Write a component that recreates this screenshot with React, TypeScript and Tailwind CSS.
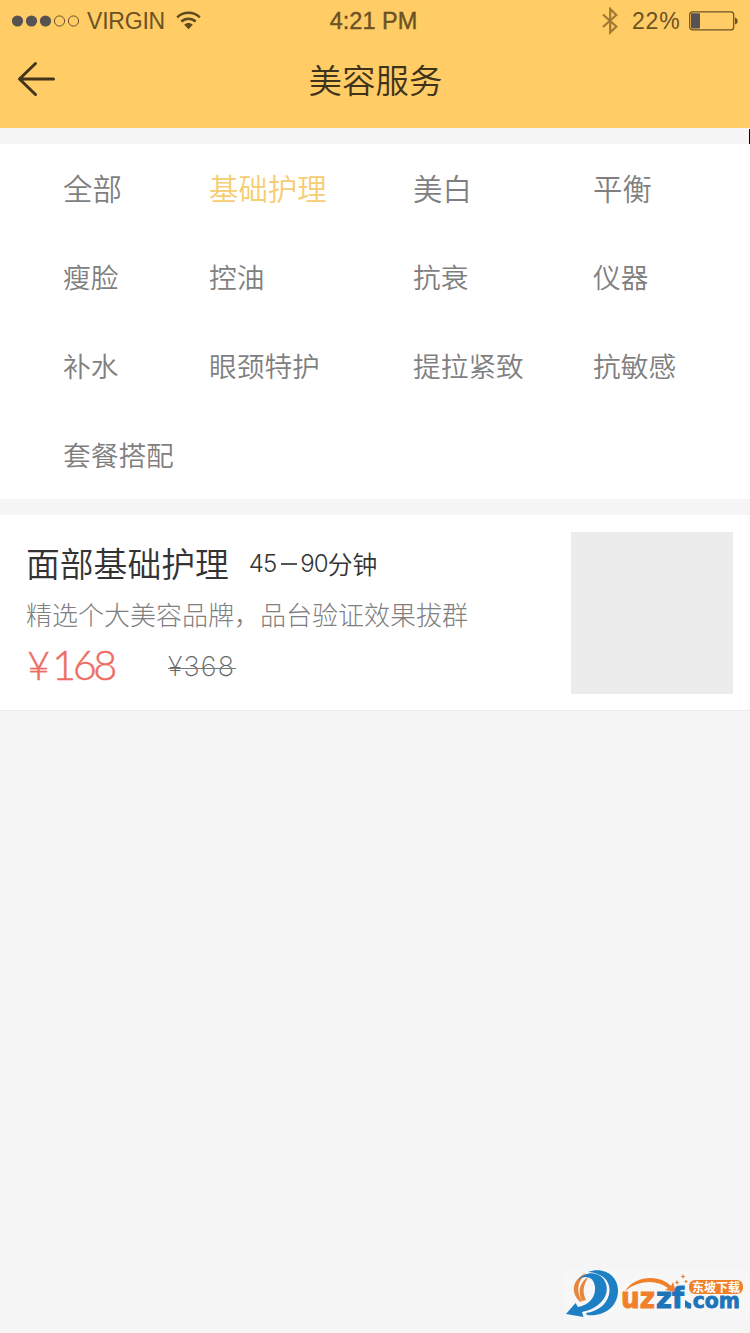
import clsx from "clsx";

interface Category {
  name: string;
  active?: boolean;
  large?: boolean;
}

const categories: Category[] = [
  { name: "全部", large: true },
  { name: "基础护理", active: true, large: true },
  { name: "美白", large: true },
  { name: "平衡", large: true },
  { name: "瘦脸" },
  { name: "控油" },
  { name: "抗衰" },
  { name: "仪器" },
  { name: "补水" },
  { name: "眼颈特护" },
  { name: "提拉紧致" },
  { name: "抗敏感" },
  { name: "套餐搭配" },
];

const StatusBar = () => {
  return (
    <div className="grid h-[41px] grid-cols-3 items-center font-['Liberation_Sans',sans-serif] text-[23px] leading-none text-[#6b5224]">
      <div className="flex items-center pl-3">
        <svg width="68" height="12" viewBox="0 0 68 12">
          <circle cx="5.5" cy="6" r="5.6" fill="#555251" />
          <circle cx="19.5" cy="6" r="5.6" fill="#555251" />
          <circle cx="33.5" cy="6" r="5.6" fill="#555251" />
          <circle cx="47.5" cy="6" r="5.1" fill="none" stroke="#6b5224" />
          <circle cx="61.5" cy="6" r="5.1" fill="none" stroke="#6b5224" />
        </svg>
        <span className="ml-[7px] w-[78px] pt-px text-[23px] tracking-[-0.2px]">VIRGIN</span>
        <svg className="ml-[11px]" width="25" height="19" viewBox="0 0 25 19">
          <g fill="none" stroke="#5f491f" strokeWidth="2.5">
            <path d="M1.2 6.3C7.5 0.3 17.5 0.3 23.8 6.3" />
            <path d="M5.3 10.6C9.4 6.8 15.6 6.8 19.7 10.6" />
          </g>
          <path d="M8.2 13.7C10.6 11.5 14.4 11.5 16.8 13.7L12.5 18.2Z" fill="#5f491f" />
        </svg>
      </div>
      <div className="pt-[3px] pr-[3px] text-center text-[23.5px] [-webkit-text-stroke:0.4px_#6b5224]">
        4:21 PM
      </div>
      <div className="flex items-center justify-end pr-3">
        <svg width="16" height="28" viewBox="0 0 16 28">
          <path
            d="M1 7.5L14.3 19.5L8.2 25.5V2L14.3 8L1 20"
            fill="none"
            stroke="#a07a35"
            strokeWidth="2.2"
          />
        </svg>
        <span className="ml-[14px] w-[49px] pt-px text-[23px] tracking-[0.8px]">22%</span>
        <svg className="ml-2" width="49" height="20" viewBox="0 0 49 20">
          <rect x="0.7" y="0.9" width="44" height="18" rx="3" fill="none" stroke="#6b5224" strokeWidth="1.2" />
          <rect x="2" y="2.3" width="9" height="15.2" rx="1" fill="#555251" />
          <path d="M46 6.5C49.6 7.5 49.6 12.5 46 13.5Z" fill="#6b5224" />
        </svg>
      </div>
    </div>
  );
};

const Header = () => {
  return (
    <header className="h-32 bg-[#ffcc66]">
      <StatusBar />
      <div className="grid h-[75px] grid-cols-[100px_1fr_100px] items-center">
        <button className="pl-[17px]">
          <svg width="39" height="36" viewBox="0 0 39 36">
            <path
              d="M18.5 2.5L2.5 18L18.5 33.5M2.5 18H36.5"
              fill="none"
              stroke="#43341a"
              strokeWidth="3"
              strokeLinecap="round"
              strokeLinejoin="round"
            />
          </svg>
        </button>
        <h1 className="pl-px text-center text-[33.5px] leading-none font-[350] text-[#40331c]">
          美容服务
        </h1>
      </div>
    </header>
  );
};

const CategoryGrid = () => {
  return (
    <nav className="grid h-[355px] grid-cols-[146px_204px_180px_1fr] grid-rows-4 bg-white pl-[63px]">
      {categories.map((item) => (
        <button
          key={item.name}
          className={clsx(
            "text-left leading-none font-[350]",
            item.large ? "pb-0.5 text-[29.4px]" : "text-[27.7px]",
            item.active ? "text-[#f6cd72]" : "text-[#7f7f7f]"
          )}
        >
          {item.name}
        </button>
      ))}
    </nav>
  );
};

const ServiceCard = () => {
  return (
    <section className="flex h-[195px] justify-between bg-white pt-[17px] pr-[17px] pl-[26px]">
      <div>
        <div className="flex h-[62px] items-center leading-none text-[#333]">
          <h2 className="text-[33.8px] font-[350]">面部基础护理</h2>
          <span className="ml-5 flex items-center pt-[3px] text-[24.8px] font-[350]">
            <span className="font-['Inter',sans-serif] text-[24px] font-light tracking-[-0.9px]">45</span>
            <span className="mr-[3px] ml-[5px] h-0.5 w-4 bg-[#555]" />
            <span className="font-['Inter',sans-serif] text-[24px] font-light tracking-[-0.9px]">90</span>
            <span className="pb-0.5">分钟</span>
          </span>
        </div>
        <p className="h-10 text-[26px] leading-10 font-light text-[#808080]">
          精选个大美容品牌，品台验证效果拔群
        </p>
        <div className="flex h-[62px] items-center leading-none">
          <span className="flex w-[142px] items-baseline pl-px font-['Lato',sans-serif] text-[41.5px] font-light text-[#ee6b62] [-webkit-text-stroke:0.4px_#ee6b62]">
            <span className="w-[25px] text-[40px]">¥</span>
            <span className="tracking-[-3.4px]">168</span>
          </span>
          <span className="relative pt-[3px] font-['Inter',sans-serif] text-[27px] font-extralight tracking-[1.2px] text-[#666]">
            ¥368
            <span className="absolute top-[18px] left-0 h-px w-[68px] bg-[#777]" />
          </span>
        </div>
      </div>
      <div className="size-[162px] bg-[#ececec]" />
    </section>
  );
};

const Watermark = () => {
  return (
    <svg
      className="absolute right-0 bottom-0"
      width="195"
      height="73"
      viewBox="0 0 195 73"
      fontFamily="'DejaVu Sans', sans-serif"
      fontWeight="bold"
    >
      <rect x="10" y="10" width="183" height="50" fill="#f7f7f7" />
      <path d="M31 13C17 20 15 32 25 42L27 41C21 32 22 22 31 13Z" fill="#e8863c" />
      <path d="M34 16C25 22 22 31 27 41L31 40C27 32 28 25 34 16Z" fill="#e8863c" />
      <path d="M23 20C31 10 47 11 51 24C55 37 43 49 27 52L28.500 57L11 54L20.500 43L23 47C34 45 41 37 40 27C39 17 31 14 23 20Z" fill="#1d7fc4" />
      <path d="M33 12C50 6 64 17 63 32C62 47 49 57 32 55L31 53C45 51 54 42 54.500 31C55 20 47 13 33 12Z" fill="#1d7fc4" />
      <path d="M70 31C80 15 105 14 116 26L118 22L121 32L110 30L113 28C101 19 84 20 70 31Z" fill="#f0812a" />
      <g fontSize="29" strokeWidth="1">
        <text x="66" y="47.500" textLength="34" lengthAdjust="spacingAndGlyphs" fill="#f0812a" stroke="#f0812a">
          uz
        </text>
        <text x="101" y="47.500" textLength="28" lengthAdjust="spacingAndGlyphs" fill="#1d74b8" stroke="#1d74b8">
          zf
        </text>
        <text x="130" y="47.500" textLength="55" lengthAdjust="spacingAndGlyphs" fontSize="21" fill="#1d74b8" stroke="#1d74b8" strokeWidth="0.8">
          .com
        </text>
      </g>
      <path d="M130 40L136 44L130 48Z" fill="#1d74b8" />
      <rect x="134" y="20" width="54" height="14" rx="6" fill="#f0812a" />
      <text
        x="137"
        y="31.500"
        fontSize="12"
        textLength="48"
        fontFamily="'Noto Sans CJK SC', sans-serif"
        fill="#fff"
      >
        东坡下载
      </text>
      <path d="M122 20.500V24.500M120 22.500H124M128 14.500V18.500M126 16.500H130M131 20V23M129.500 21.500H132.500" stroke="#e8863c" strokeWidth="1.200" />
    </svg>
  );
};

const App = () => {
  return (
    <div className="relative h-[1333px] w-[750px] overflow-hidden bg-[#f5f5f5] font-['Noto_Sans_CJK_SC',sans-serif]">
      <Header />
      <div className="flex h-4 items-end justify-end">
        <div className="h-[15px] w-px bg-black" />
      </div>
      <CategoryGrid />
      <div className="h-4" />
      <ServiceCard />
      <div className="h-px bg-[#ececec]" />
      <Watermark />
    </div>
  );
};

export default App;
